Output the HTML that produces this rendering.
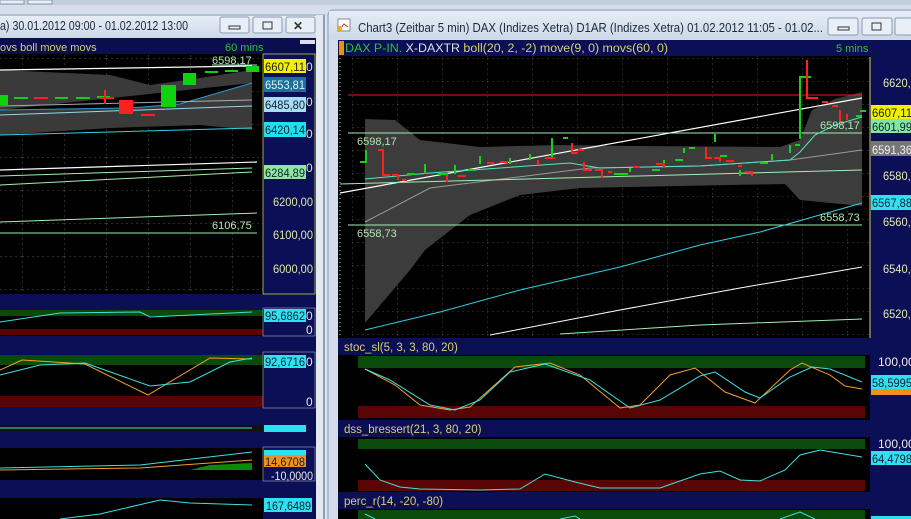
<!DOCTYPE html>
<html><head><meta charset="utf-8"><style>
body{margin:0;width:911px;height:519px;overflow:hidden;background:#d5deea;font-family:"Liberation Sans",sans-serif}
svg{display:block}
text{font-family:"Liberation Sans",sans-serif}
</style></head><body>
<svg width="911" height="519" viewBox="0 0 911 519" xmlns="http://www.w3.org/2000/svg">
<defs>
<linearGradient id="tb" x1="0" y1="0" x2="0" y2="1"><stop offset="0" stop-color="#e6edf6"/><stop offset="1" stop-color="#cdd9e8"/></linearGradient>
<pattern id="gridL" width="42" height="33" patternUnits="userSpaceOnUse" x="22" y="58"><path d="M0 0V33M0 0H42" stroke="#555" stroke-width="1" stroke-dasharray="2,3" fill="none"/></pattern>
<pattern id="gridR" width="45" height="23" patternUnits="userSpaceOnUse" x="352" y="58"><path d="M0 0V23M0 0H45" stroke="#4a4a4a" stroke-width="1" stroke-dasharray="2,3" fill="none"/></pattern>
</defs>
<rect width="911" height="519" fill="#d5deea"/>
<rect x="0" y="0" width="911" height="5" fill="#c4cfdd"/>
<rect x="0" y="0" width="24" height="4" fill="#e8eef5" stroke="#8a9ab0"/>
<rect x="28" y="0" width="24" height="4" fill="#e8eef5" stroke="#8a9ab0"/>
<!-- left window -->
<rect x="-5" y="15" width="330" height="510" fill="#d2dceb" stroke="#8d9db3"/>
<rect x="-5" y="16" width="328" height="22" fill="url(#tb)"/>
<text x="0" y="30" font-size="12.5" fill="#1e2a3a" textLength="188" lengthAdjust="spacingAndGlyphs">a) 30.01.2012 09:00 - 01.02.2012 13:00</text>
<g fill="#e9eff7" stroke="#8b9ab0"><rect x="220" y="17" width="29" height="16" rx="2"/><rect x="253" y="17" width="29" height="16" rx="2"/><rect x="286" y="17" width="29" height="16" rx="2"/></g>
<rect x="229" y="26" width="11" height="3" fill="none" stroke="#333"/>
<rect x="263" y="22" width="9" height="7" fill="none" stroke="#333"/>
<text x="293" y="30" font-size="12" fill="#333" font-weight="bold">✕</text>
<!-- left chart -->
<rect x="0" y="38" width="316" height="481" fill="#0b0f55"/>
<rect x="0" y="38" width="316" height="16" fill="#0a0e4e"/>
<text x="0" y="51" font-size="11" fill="#d8d070">ovs boll move movs</text>
<text x="225" y="51" font-size="11" fill="#30c030">60 mins</text>
<rect x="300" y="40" width="15" height="4" fill="#dde" />
<rect x="0" y="54" width="263" height="240" fill="#000"/>
<rect x="0" y="54" width="263" height="240" fill="url(#gridL)"/>
<rect x="263" y="54" width="52" height="240" fill="#0b0f55" stroke="#c8c860" stroke-width="0.8"/>
<path d="M0 70 L110 75 L150 85 L200 78 L252 70 L252 130 L200 125 L110 128 L0 135Z" fill="#3a3a3a"/>
<path d="M0 70 L252 66" stroke="#fff" stroke-width="1.3"/>
<path d="M0 110 L130 108 L180 104 L252 83" stroke="#2a9ad0" stroke-width="1"/>
<path d="M0 115 L252 106" stroke="#90d8f0" stroke-width="1"/>
<path d="M0 106 L252 100" stroke="#aaa" stroke-width="1"/>
<path d="M0 135 L252 128" stroke="#30d0e0" stroke-width="1"/>
<path d="M0 170 L257 162" stroke="#fff" stroke-width="1.2"/>
<path d="M0 176 L252 168" stroke="#a0f0b0" stroke-width="1"/>
<path d="M0 185 L252 172" stroke="#a0f0b0" stroke-width="1"/>
<path d="M0 222 L257 213" stroke="#a0f0b0" stroke-width="1"/>
<path d="M0 233 L257 233" stroke="#a0f0b0" stroke-width="1"/>
<path d="M212 65 L257 65" stroke="#a0f0b0" stroke-width="1"/>
<g fill="#10d010"><rect x="0" y="95" width="8" height="10"/><rect x="161" y="85" width="15" height="22"/><rect x="183" y="73" width="13" height="12"/><rect x="246" y="66" width="13" height="6"/></g>
<g stroke="#10d010" stroke-width="2"><path d="M14 98H28M55 98H68M76 98H90M97 97H110M205 72H218M225 71H238"/></g>
<g stroke="#ff2020" stroke-width="2"><path d="M34 98H48M99 98H114M105 90V104M141 115H155"/></g>
<rect x="119" y="100" width="14" height="14" fill="#ff2020"/>
<text x="212" y="64" font-size="11" fill="#b0e8b0">6598,17</text>
<text x="212" y="229" font-size="11" fill="#b0e8b0">6106,75</text>
<g font-size="12" fill="#dde8a0" lengthAdjust="spacingAndGlyphs">
<rect x="264" y="59" width="42" height="14" fill="#f0f000"/><text x="265" y="71" fill="#222" textLength="40" lengthAdjust="spacingAndGlyphs">6607,11</text><text x="306" y="71">0</text>
<rect x="264" y="77" width="42" height="15" fill="#17719a"/><text x="265" y="89" fill="#e0f0ff" textLength="40" lengthAdjust="spacingAndGlyphs">6553,81</text>
<rect x="264" y="97" width="42" height="15" fill="#a8dcf5"/><text x="265" y="109" fill="#123" textLength="40" lengthAdjust="spacingAndGlyphs">6485,80</text><text x="306" y="106">0</text>
<rect x="264" y="122" width="42" height="15" fill="#20e0f0"/><text x="265" y="134" fill="#123" textLength="40" lengthAdjust="spacingAndGlyphs">6420,14</text><text x="306" y="138">0</text>
<rect x="264" y="165" width="42" height="14" fill="#90e8a0"/><text x="265" y="177" fill="#123" textLength="40" lengthAdjust="spacingAndGlyphs">6284,89</text><text x="306" y="172">0</text>
<text x="273" y="206" textLength="40" lengthAdjust="spacingAndGlyphs">6200,00</text><text x="273" y="239" textLength="40" lengthAdjust="spacingAndGlyphs">6100,00</text><text x="273" y="273" textLength="40" lengthAdjust="spacingAndGlyphs">6000,00</text>
</g>
<!-- left subpanels -->
<rect x="0" y="310" width="263" height="26" fill="#000"/>
<rect x="0" y="310" width="263" height="6" fill="#0a4a0a"/><rect x="0" y="329" width="263" height="6" fill="#5a0505"/>
<path d="M0 322 L60 313 L140 312 L150 317 L252 312" stroke="#40e0e0" fill="none"/>
<rect x="0" y="355" width="263" height="52" fill="#000"/>
<rect x="0" y="355" width="263" height="10" fill="#0a4a0a"/><rect x="0" y="396" width="263" height="11" fill="#5a0505"/>
<path d="M0 370 L22 360 L85 364 L148 395 L210 358 L252 359" stroke="#f0a030" fill="none"/>
<path d="M0 375 L40 365 L85 363 L150 386 L190 382 L230 362 L252 358" stroke="#40e0e0" fill="none"/>
<rect x="0" y="425" width="263" height="6" fill="#111"/><path d="M0 428 H252" stroke="#40e0e0"/>
<rect x="0" y="448" width="263" height="32" fill="#000"/>
<path d="M190 470 L210 465 L252 463 L252 470 L190 470Z" fill="#0a8a0a"/>
<path d="M0 470 L140 468 L252 460" stroke="#f0a030" fill="none"/>
<path d="M0 468 L140 465 L252 452" stroke="#40e0e0" fill="none"/>
<rect x="0" y="498" width="263" height="21" fill="#000"/>
<path d="M60 519 L100 514 L160 500 L190 503 L252 505" stroke="#40e0e0" fill="none"/>
<g font-size="12" fill="#e8e8e8">
<rect x="263" y="308" width="52" height="28" fill="#0b0f55" stroke="#aab" stroke-width="0.6"/>
<rect x="264" y="309" width="42" height="13" fill="#30e0f0"/><text x="265" y="320" fill="#123" textLength="40" lengthAdjust="spacingAndGlyphs">95,6862</text><text x="306" y="320">0</text><text x="306" y="334">0</text>
<rect x="263" y="352" width="52" height="56" fill="#0b0f55" stroke="#aab" stroke-width="0.6"/>
<rect x="264" y="355" width="42" height="13" fill="#30e0f0"/><text x="265" y="366" fill="#123" textLength="40" lengthAdjust="spacingAndGlyphs">92,6716</text><text x="306" y="366">0</text><text x="306" y="406">0</text>
<rect x="264" y="425" width="42" height="7" fill="#30e0f0"/>
<rect x="263" y="447" width="52" height="34" fill="#0b0f55" stroke="#aab" stroke-width="0.6"/>
<rect x="264" y="450" width="42" height="6" fill="#30e0f0"/>
<rect x="264" y="455" width="42" height="12" fill="#f09020"/><text x="265" y="466" fill="#123" textLength="40" lengthAdjust="spacingAndGlyphs">14,6708</text>
<text x="271" y="480" textLength="42" lengthAdjust="spacingAndGlyphs">-10,0000</text>
<rect x="264" y="498" width="48" height="14" fill="#30e0f0"/><text x="266" y="510" fill="#123" textLength="45" lengthAdjust="spacingAndGlyphs">167,6489</text>
</g>
<!-- gap -->
<rect x="316" y="15" width="10" height="504" fill="#e4eaf2"/>
<rect x="323" y="15" width="2" height="504" fill="#8d9db3"/>
<!-- right window -->
<rect x="328" y="10" width="600" height="520" rx="5" fill="#d2dceb" stroke="#8d9db3"/>
<rect x="329" y="11" width="590" height="28" fill="url(#tb)"/>
<rect x="338" y="19" width="12" height="12" fill="#fff" stroke="#888"/><path d="M340 29 L344 24 L348 27" stroke="#c03030" fill="none"/><rect x="337" y="26" width="5" height="6" fill="#e8b020"/>
<text x="358" y="32" font-size="12.5" fill="#1e2a3a" textLength="465" lengthAdjust="spacingAndGlyphs">Chart3 (Zeitbar 5 min)  DAX (Indizes Xetra) D1AR (Indizes Xetra) 01.02.2012 11:05 - 01.02...</text>
<g fill="#e9eff7" stroke="#8b9ab0"><rect x="828" y="18" width="30" height="17" rx="2"/><rect x="862" y="18" width="30" height="17" rx="2"/><rect x="895" y="18" width="30" height="17" rx="2"/></g>
<rect x="838" y="27" width="11" height="3" fill="none" stroke="#333"/><rect x="872" y="23" width="9" height="7" fill="none" stroke="#333"/>
<rect x="338" y="40" width="573" height="479" fill="#0b0f55"/>
<rect x="339" y="41" width="5" height="14" fill="#f09010"/>
<text x="345" y="52" font-size="11.5" textLength="323" lengthAdjust="spacingAndGlyphs"><tspan fill="#30c030">DAX P-IN.</tspan><tspan fill="#e0e0e0"> X-DAXTR </tspan><tspan fill="#d8d070">boll(20, 2, -2) move(9, 0) movs(60, 0)</tspan></text>
<text x="836" y="52" font-size="11" fill="#30c030">5 mins</text>
<rect x="338" y="56" width="532" height="282" fill="#000"/>
<rect x="352" y="56" width="518" height="282" fill="url(#gridR)"/>
<path d="M340 58V338" stroke="#ccc" stroke-dasharray="1,3"/>
<rect x="870" y="57" width="41" height="281" fill="#0b0f55"/><path d="M870 57V338" stroke="#d0d060"/>
<path d="M365 119 L395 120 L420 140 L480 147 L560 145 L630 146 L780 147 L800 140 L812 110 L835 99 L862 92 L862 206 L830 203 L800 200 L785 184 L680 186 L580 188 L520 195 L470 215 L425 250 L410 270 L365 323Z" fill="#3c3c3c"/>
<path d="M365 222 L430 188 L590 168 L700 166 L790 160 L862 150" stroke="#999" fill="none"/>
<path d="M348 95 H862" stroke="#e02020"/>
<path d="M348 133 H862" stroke="#a0f0b0"/>
<path d="M348 225 H862" stroke="#a0f0b0"/>
<path d="M340 193 L862 98" stroke="#fff" stroke-width="1.2"/>
<path d="M340 184 L862 170" stroke="#a0f0b0"/>
<path d="M365 179 L430 173 L570 163 L600 168 L700 166 L790 160 L800 152 L815 135 L835 125 L862 117" stroke="#50e8c0" fill="none"/>
<path d="M365 330 L440 312 L520 290 L620 267 L700 245 L760 232 L862 203" stroke="#30d0e0" fill="none"/>
<path d="M490 335 L620 310 L740 288 L862 267" stroke="#fff"/>
<path d="M560 334 L700 325 L862 319" stroke="#a0f0b0"/>
<g stroke="#18d018" stroke-width="2" fill="none">
<path d="M360 162H366V150"/><path d="M407 174H415M425 174V164M438 174H448M455 174V165M468 170H476M480 164V156M510 164V158M530 160V154M552 157V138M563 138H568"/>
<path d="M614 174H628M630 168V172M652 170H660M664 160V165M675 160H683M684 153V148M689 148H695M715 134V142M720 156H727M740 170V176M760 163H768M772 160V154M790 153V145M795 145H800M800 139V77H811"/>
<path d="M856 116H862M860 111H866"/>
</g>
<g stroke="#ff2020" stroke-width="2" fill="none">
<path d="M378 150H383V175H390M392 175H398V180M402 180H407M447 175V182M458 176H466M487 163H494M500 162H508M538 160V165M545 158H555M572 143V153H578M578 150H584M584 162V170H592M595 170H602V178M608 172H612M633 167H640M656 164H664V168M706 147V158H712M714 158H720V162M726 161H734M738 166H742M745 172H752V176M807 60V98H818M822 102H828M832 106H838M840 110V124M847 114V120"/>
</g>
<text x="357" y="145" font-size="11" fill="#b0e8b0">6598,17</text>
<text x="357" y="237" font-size="11" fill="#b0e8b0">6558,73</text>
<text x="820" y="129" font-size="11" fill="#b0e8b0">6598,17</text>
<text x="820" y="221" font-size="11" fill="#b0e8b0">6558,73</text>
<g font-size="12" fill="#e8e8b0">
<text x="883" y="87" textLength="40" lengthAdjust="spacingAndGlyphs">6620,00</text>
<rect x="871" y="105" width="40" height="14" fill="#f0f000"/><text x="872" y="117" fill="#222" textLength="40" lengthAdjust="spacingAndGlyphs">6607,11</text>
<rect x="871" y="119" width="40" height="14" fill="#80e8a0"/><text x="872" y="131" fill="#123" textLength="40" lengthAdjust="spacingAndGlyphs">6601,99</text>
<rect x="871" y="141" width="40" height="15" fill="#777"/><text x="872" y="154" fill="#eee" textLength="40" lengthAdjust="spacingAndGlyphs">6591,36</text>
<text x="883" y="180" textLength="40" lengthAdjust="spacingAndGlyphs">6580,00</text>
<rect x="871" y="195" width="40" height="15" fill="#30e0f0"/><text x="872" y="207" fill="#123" textLength="40" lengthAdjust="spacingAndGlyphs">6567,88</text>
<text x="883" y="226" textLength="40" lengthAdjust="spacingAndGlyphs">6560,00</text><text x="883" y="273" textLength="40" lengthAdjust="spacingAndGlyphs">6540,00</text><text x="883" y="318" textLength="40" lengthAdjust="spacingAndGlyphs">6520,00</text>
</g>
<!-- stoc -->
<text x="344" y="351" font-size="11.5" fill="#d8d070">stoc_sl(5, 3, 3, 80, 20)</text>
<rect x="338" y="355" width="532" height="65" fill="#000"/>
<rect x="358" y="356" width="507" height="12" fill="#0a4a0a"/><rect x="358" y="406" width="507" height="12" fill="#5a0505"/>
<path d="M365 369 L395 385 L420 405 L450 410 L470 407 L515 367 L550 363 L580 375 L620 408 L640 405 L670 375 L695 368 L725 392 L755 403 L790 370 L802 363 L830 375 L845 386 L862 389" stroke="#f0a030" fill="none"/>
<path d="M365 369 L390 380 L430 405 L455 410 L480 400 L510 372 L545 364 L590 380 L630 408 L660 400 L700 376 L715 372 L745 392 L760 398 L790 377 L812 367 L830 369 L862 382" stroke="#40e0e0" fill="none"/>
<rect x="870" y="355" width="41" height="65" fill="#0b0f55"/>
<text x="878" y="366" font-size="12" fill="#eee">100,00</text>
<rect x="871" y="375" width="40" height="20" fill="#f09020"/>
<rect x="871" y="375" width="40" height="14" fill="#30e0f0"/><text x="872" y="387" font-size="12" fill="#123" textLength="40" lengthAdjust="spacingAndGlyphs">58,5995</text>
<!-- dss -->
<text x="344" y="433" font-size="11.5" fill="#d8d070">dss_bressert(21, 3, 80, 20)</text>
<rect x="338" y="437" width="532" height="55" fill="#000"/>
<rect x="358" y="439" width="507" height="10" fill="#0a4a0a"/><rect x="358" y="480" width="507" height="11" fill="#5a0505"/>
<path d="M365 464 L380 480 L400 487 L420 489 L480 490 L520 489 L545 474 L575 482 L600 488 L660 488 L700 474 L720 471 L740 480 L760 481 L785 470 L800 455 L820 450 L862 457" stroke="#40e0e0" fill="none"/>
<rect x="870" y="437" width="41" height="55" fill="#0b0f55"/>
<text x="878" y="448" font-size="12" fill="#eee">100,00</text>
<rect x="871" y="451" width="40" height="14" fill="#30e0f0"/><text x="872" y="463" font-size="12" fill="#123" textLength="40" lengthAdjust="spacingAndGlyphs">64,4798</text>
<!-- perc -->
<text x="344" y="505" font-size="11.5" fill="#d8d070">perc_r(14, -20, -80)</text>
<rect x="338" y="509" width="532" height="10" fill="#000"/>
<rect x="358" y="510" width="507" height="9" fill="#0a4a0a"/>
<path d="M365 514 L375 519 M560 519 L575 516 L580 519 M780 519 L800 512 L815 519" stroke="#40e0e0" fill="none"/>
<rect x="871" y="516" width="40" height="3" fill="#30e0f0"/>
</svg>
</body></html>
